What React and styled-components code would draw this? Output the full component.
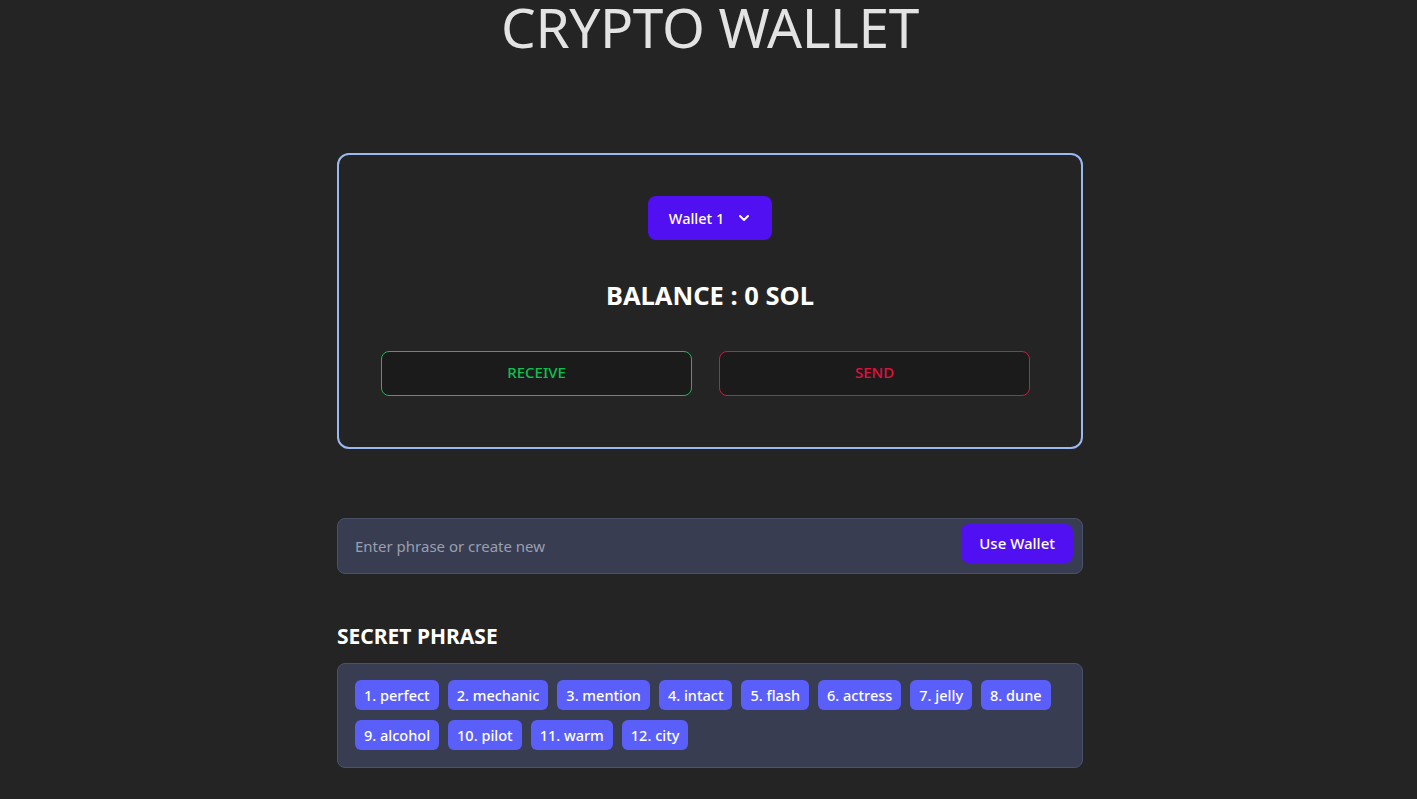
import React from 'react';
import styled, { createGlobalStyle } from 'styled-components';

const GlobalStyle = createGlobalStyle`
  html, body {
    margin: 0;
    padding: 0;
    background: #242424;
  }
  body {
    font-family: 'Noto Sans', 'Open Sans', sans-serif;
    color: #ffffff;
  }
  * {
    box-sizing: border-box;
  }
`;

const Page = styled.div`
  min-height: 100vh;
  padding: 0 0 40px 3px;
`;

const Main = styled.main`
  width: 746px;
  margin: 0 auto;
  display: flex;
  flex-direction: column;
`;

const Title = styled.h1`
  margin: 0;
  height: 60px;
  text-align: center;
  font-size: 55px;
  line-height: 54px;
  font-weight: 400;
  color: #e3e3e3;
  letter-spacing: -0.4px;
`;

const Card = styled.section`
  margin-top: 93px;
  height: 296px;
  border: 2px solid #9ab8f2;
  border-radius: 12px;
  display: flex;
  flex-direction: column;
  align-items: center;
  padding-top: 41px;
`;

const WalletButton = styled.button`
  display: flex;
  align-items: center;
  gap: 12px;
  height: 44px;
  padding: 0 20px 0 21px;
  border: none;
  border-radius: 8px;
  background: #5010f2;
  color: #ffffff;
  font-family: inherit;
  font-size: 14.5px;
  font-weight: 500;
  cursor: pointer;
`;

const Balance = styled.h2`
  margin: 38px 0 0;
  font-size: 25.5px;
  line-height: 34px;
  font-weight: 700;
  color: #ffffff;
`;

const ActionRow = styled.div`
  margin-top: 39px;
  width: 100%;
  display: grid;
  grid-template-columns: 1fr 1fr;
  gap: 27px;
  padding: 0 51px 0 42px;
`;

const ActionButton = styled.button`
  height: 45px;
  padding: 0 0 3px;
  border: 1px solid ${p => p.$color};
  border-radius: 8px;
  background: #1b1b1b;
  color: ${p => p.$color};
  font-family: inherit;
  font-size: 15px;
  font-weight: 500;
  text-transform: uppercase;
  cursor: pointer;
`;

const PhraseForm = styled.form`
  margin-top: 69px;
  height: 56px;
  display: flex;
  align-items: center;
  padding: 0 9px 0 17px;
  background: #383d52;
  border: 1px solid #4b5169;
  border-radius: 8px;
`;

const PhraseInput = styled.input`
  flex: 1;
  background: transparent;
  border: none;
  outline: none;
  color: #ffffff;
  font-family: inherit;
  font-size: 15px;
  padding: 0;

  &::placeholder {
    color: #9a9fae;
  }
`;

const UseButton = styled.button`
  height: 39px;
  padding: 0 18px;
  margin-top: -6px;
  border: none;
  border-radius: 8px;
  background: #5010f2;
  color: #ffffff;
  font-family: inherit;
  font-size: 15px;
  font-weight: 500;
  cursor: pointer;
`;

const SectionTitle = styled.h3`
  margin: 48px 0 0;
  font-size: 21px;
  line-height: 28px;
  font-weight: 700;
  color: #ffffff;
`;

const WordBox = styled.div`
  margin-top: 13px;
  display: flex;
  flex-wrap: wrap;
  gap: 10px 9px;
  padding: 16px 30px 17px 17px;
  background: #383d52;
  border: 1px solid #4b5169;
  border-radius: 8px;
`;

const Word = styled.span`
  height: 30px;
  display: inline-flex;
  align-items: center;
  padding: 0 9px 1px;
  background: #5b5ff9;
  border-radius: 6px;
  color: #ffffff;
  font-size: 14.5px;
  font-weight: 500;
`;

const Chevron = () => (
  <svg width="16" height="16" viewBox="0 0 24 24" fill="none" stroke="currentColor" strokeWidth="3" strokeLinecap="round" strokeLinejoin="round">
    <path d="M6 9l6 6 6-6" />
  </svg>
);

const words = ['perfect', 'mechanic', 'mention', 'intact', 'flash', 'actress', 'jelly', 'dune', 'alcohol', 'pilot', 'warm', 'city'];

export default function App() {
  return (
    <Page>
      <GlobalStyle />
      <Main>
        <Title>CRYPTO WALLET</Title>

        <Card>
          <WalletButton>
            Wallet 1 <Chevron />
          </WalletButton>
          <Balance>BALANCE : 0 SOL</Balance>
          <ActionRow>
            <ActionButton $color="#0ac24f">Receive</ActionButton>
            <ActionButton $color="#e3103c">Send</ActionButton>
          </ActionRow>
        </Card>

        <PhraseForm onSubmit={e => e.preventDefault()}>
          <PhraseInput placeholder="Enter phrase or create new" />
          <UseButton type="submit">Use Wallet</UseButton>
        </PhraseForm>

        <SectionTitle>SECRET PHRASE</SectionTitle>
        <WordBox>
          {words.map((w, i) => (
            <Word key={w}>{i + 1}. {w}</Word>
          ))}
        </WordBox>
      </Main>
    </Page>
  );
}
